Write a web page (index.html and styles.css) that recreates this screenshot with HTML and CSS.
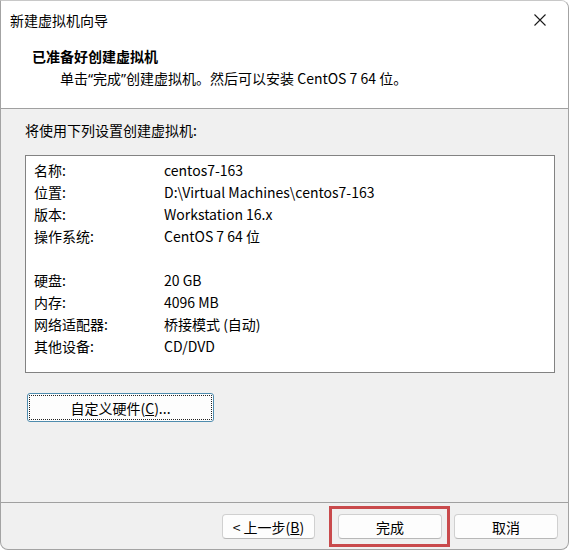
FILE: index.html
```html
<!DOCTYPE html>
<html lang="zh-CN">
<head>
  <meta charset="UTF-8" />
  <title>新建虚拟机向导</title>
  <link rel="stylesheet" href="styles.css">
</head>
<body>
  <div class="window">
    <div class="titlebar">
      <span class="title">新建虚拟机向导</span>
      <span class="close">
        <svg width="12" height="12" viewBox="0 0 12 12">
          <path d="M0.5 0.5 L11.5 11.5 M11.5 0.5 L0.5 11.5" stroke="#1a1a1a" stroke-width="1.1" fill="none"/>
        </svg>
      </span>
    </div>

    <div class="header">
      <div class="heading">已准备好创建虚拟机</div>
      <div class="subtitle">单击<span class="q">“</span>完成<span class="q">”</span>创建虚拟机。然后可以安装 CentOS 7 64 位。</div>
    </div>

    <div class="content">
      <div class="intro">将使用下列设置创建虚拟机:</div>
      <div class="summary">
        <div class="row"><span class="label">名称:</span><span>centos7-163</span></div>
        <div class="row"><span class="label">位置:</span><span>D:\Virtual Machines\centos7-163</span></div>
        <div class="row"><span class="label">版本:</span><span>Workstation 16.x</span></div>
        <div class="row"><span class="label">操作系统:</span><span>CentOS 7 64 位</span></div>
        <div class="row"></div>
        <div class="row"><span class="label">硬盘:</span><span>20 GB</span></div>
        <div class="row"><span class="label">内存:</span><span>4096 MB</span></div>
        <div class="row"><span class="label">网络适配器:</span><span>桥接模式 (自动)</span></div>
        <div class="row"><span class="label">其他设备:</span><span>CD/DVD</span></div>
      </div>
      <button class="btn custom">自定义硬件(<u>C</u>)...</button>
    </div>

    <div class="footer">
      <button class="btn back">&lt; 上一步(<u>B</u>)</button>
      <button class="btn finish">完成</button>
      <button class="btn cancel">取消</button>
    </div>
  </div>
</body>
</html>
```

FILE: styles.css
```css
body {
  margin: 0;
  background: #ffffff;
  font-family: "Noto Sans CJK SC", "Noto Sans", sans-serif;
  font-size: 14px;
  color: #000;
}

.window {
  width: 569px;
  height: 550px;
  box-sizing: border-box;
  border: 1px solid #a3a3a3;
  border-top-color: #c8c8c8;
  border-radius: 0 8px 8px 8px;
  background: #f0f0f0;
  overflow: hidden;
  display: flex;
  flex-direction: column;
}

.titlebar {
  height: 37px;
  background: #fff;
  display: flex;
  align-items: center;
  justify-content: space-between;
  padding: 0 22px 0 9px;
}

.title {
  line-height: 20px;
}

.close {
  display: flex;
}

.header {
  background: #fff;
  padding: 8px 0 20px 31px;
  border-bottom: 1px solid #a0a0a0;
}

.heading {
  font-weight: bold;
  line-height: 20px;
}

.subtitle {
  margin-top: 2px;
  padding-left: 28px;
  height: 20px;
  line-height: 20px;
}

.q {
  font-family: "Noto Sans", sans-serif;
  line-height: 1;
}

.content {
  flex: 1;
  padding: 11px 13px 0 24px;
}

.intro {
  line-height: 20px;
}

.summary {
  margin-top: 15px;
  height: 218px;
  box-sizing: border-box;
  background: #fff;
  border: 1px solid #828282;
  padding: 3px 0 0 8px;
}

.row {
  display: flex;
  height: 22px;
  line-height: 22px;
}

.label {
  width: 130px;
  flex-shrink: 0;
}

.btn {
  font-family: inherit;
  font-size: 14px;
  color: #000;
  background: #fdfdfd;
  border: 1px solid #d0d0d0;
  border-bottom-color: #b8b8b8;
  border-radius: 4px;
  padding: 0;
  height: 25px;
  line-height: 22px;
}

.custom {
  margin: 20px 0 0 2px;
  width: 187px;
  height: 29px;
  border: 1px solid #4f8cae;
  border-radius: 3px;
  outline: 1px dotted #222;
  outline-offset: -3px;
}

.footer {
  border-top: 1px solid #a0a0a0;
  padding: 11px 10px 0 0;
  height: 35px;
  display: flex;
  justify-content: flex-end;
  align-items: flex-start;
}

.back {
  width: 93px;
}

.finish {
  position: relative;
  width: 104px;
  margin-left: 23px;
}

/* red highlight box drawn over the finish button */
.finish::after {
  content: "";
  position: absolute;
  top: -9px;
  bottom: -9px;
  left: -10px;
  right: -9px;
  border: 3px solid #c94a4c;
}

.cancel {
  width: 104px;
  margin-left: 12px;
}
```
